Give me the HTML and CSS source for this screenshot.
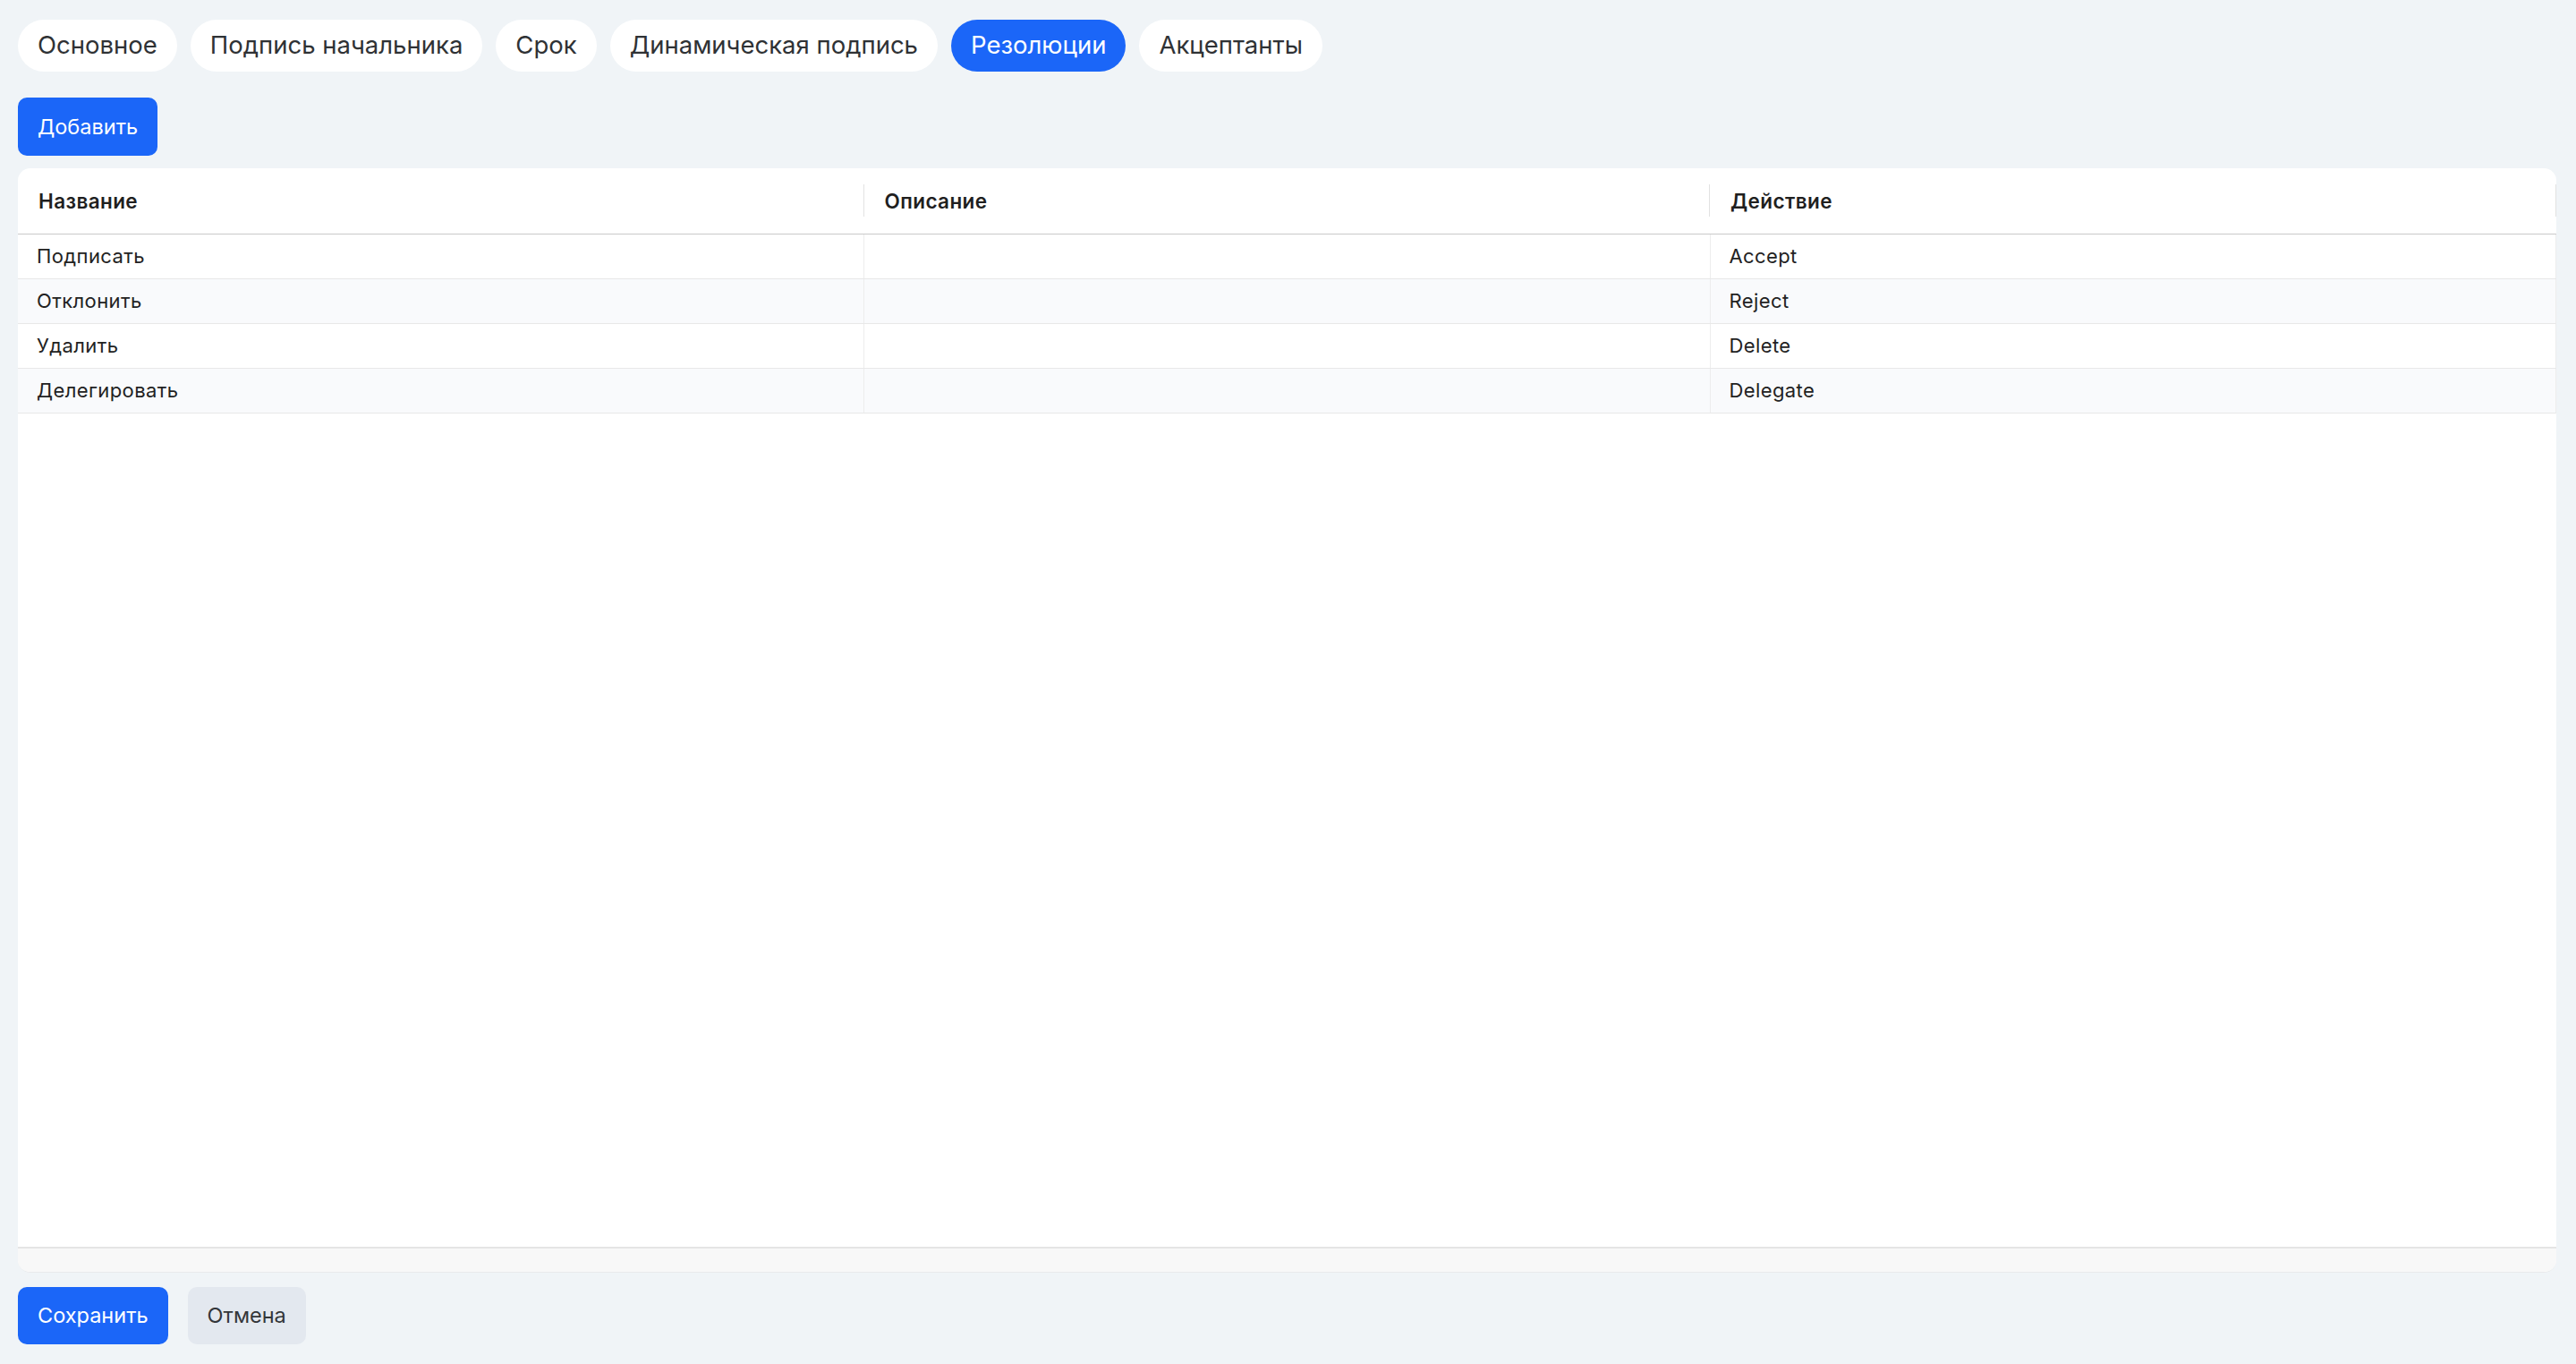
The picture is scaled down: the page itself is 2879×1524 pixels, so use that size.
FILE: index.html
```html
<!DOCTYPE html>
<html lang="ru">
<head>
<meta charset="utf-8">
<title>Резолюции</title>
<link rel="stylesheet" href="styles.css">
</head>
<body>
<div class="page">
  <nav class="tabs">
    <button class="tab">Основное</button>
    <button class="tab">Подпись начальника</button>
    <button class="tab">Срок</button>
    <button class="tab">Динамическая подпись</button>
    <button class="tab tab-active">Резолюции</button>
    <button class="tab">Акцептанты</button>
  </nav>

  <div class="toolbar">
    <button class="btn btn-primary btn-add">Добавить</button>
  </div>

  <section class="card">
    <table class="grid">
      <thead>
        <tr>
          <th>Название</th>
          <th>Описание</th>
          <th>Действие</th>
        </tr>
      </thead>
      <tbody>
        <tr><td>Подписать</td><td></td><td>Accept</td></tr>
        <tr class="alt"><td>Отклонить</td><td></td><td>Reject</td></tr>
        <tr><td>Удалить</td><td></td><td>Delete</td></tr>
        <tr class="alt"><td>Делегировать</td><td></td><td>Delegate</td></tr>
      </tbody>
    </table>
    <div class="grid-fill"></div>
    <div class="grid-footer"></div>
  </section>

  <div class="actions">
    <button class="btn btn-primary">Сохранить</button>
    <button class="btn btn-secondary">Отмена</button>
  </div>
</div>
</body>
</html>
```

FILE: styles.css
```css
* {
  box-sizing: border-box;
}

html, body {
  margin: 0;
  height: 100%;
}

body {
  background: #f0f4f7;
  font-family: "Inter", "Noto Sans", "Liberation Sans", sans-serif;
  color: #222;
}

.page {
  height: 100vh;
  display: flex;
  flex-direction: column;
  padding: 22px 22px 22px 20px;
}

.tabs {
  display: flex;
  gap: 15px;
}

.tab {
  height: 58px;
  padding: 0 22px;
  border: none;
  border-radius: 29px;
  background: #ffffff;
  color: #2f3235;
  font-family: inherit;
  font-size: 27.5px;
  font-weight: 400;
  line-height: 1;
  cursor: pointer;
}

.tab-active {
  background: #1b66f8;
  color: #ffffff;
}

.toolbar {
  display: flex;
  margin-top: 29px;
}

.btn {
  height: 64px;
  padding: 0 22px;
  border: none;
  border-radius: 10px;
  font-family: inherit;
  font-size: 23.5px;
  line-height: 1;
  cursor: pointer;
}

.btn-primary {
  background: #1b66f8;
  color: #ffffff;
}

.btn-secondary {
  background: #e3e8ef;
  color: #333639;
}

.btn-add {
  height: 65px;
}

.card {
  flex: 1;
  margin-top: 14px;
  background: #ffffff;
  border-radius: 14px;
  border-bottom: 1px solid #e9eaec;
  overflow: hidden;
  display: flex;
  flex-direction: column;
  min-height: 0;
}

.grid {
  width: 100%;
  border-collapse: collapse;
  table-layout: fixed;
}

.grid th {
  position: relative;
  height: 73px;
  padding: 0 0 0 23px;
  text-align: left;
  font-size: 22.5px;
  font-weight: 600;
  letter-spacing: 0.4px;
  color: #1f1f1f;
  border-bottom: 1px solid #c9c9c9;
}

.grid th::after {
  content: "";
  position: absolute;
  right: 0;
  top: 18px;
  height: 36px;
  width: 1px;
  background: #e2e2e2;
}

.grid td {
  height: 50px;
  padding: 0 0 0 21px;
  font-size: 22px;
  letter-spacing: 0.4px;
  color: #222222;
  border-bottom: 1px solid #e8e8e8;
  border-right: 1px solid #ededed;
}

.grid tr.alt td {
  background: #f9fafc;
}

.grid-fill {
  flex: 1;
}

.grid-footer {
  height: 28px;
  border-top: 2px solid #e5e5e5;
  background: #f8f8f8;
}

.actions {
  display: flex;
  gap: 22px;
  margin-top: 16px;
}
```
